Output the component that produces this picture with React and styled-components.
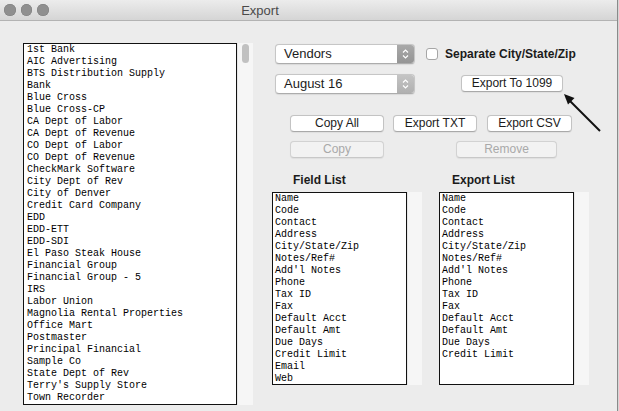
import React from "react";
import styled, { createGlobalStyle } from "styled-components";

const Global = createGlobalStyle`
  html, body { margin: 0; padding: 0; background: #d6d6d6; }
  body { font-family: "Liberation Sans", Arial, sans-serif; }
`;

const Window = styled.div`
  position: relative;
  width: 617px;
  height: 411px;
  background: #ececec;
  border-right: 1px solid #8a8a8a;
  display: flex;
  flex-direction: column;
  overflow: hidden;
`;

const TitleBar = styled.div`
  height: 20px;
  flex: none;
  border-bottom: 1px solid #b3b3b3;
  background: linear-gradient(#ececec, #d5d5d5);
  display: flex;
  align-items: center;
  padding-left: 4px;
`;

const Lights = styled.div`
  display: flex;
  gap: 5px;
  width: 45px;
`;

const Light = styled.span`
  width: 12px;
  height: 12px;
  border-radius: 50%;
  background: #8f8f8f;
  box-shadow: inset 0 0 0 0.5px #7d7d7d;
`;

const Title = styled.div`
  width: 422px;
  text-align: center;
  font-size: 13px;
  color: #4a4a4a;
`;

const Content = styled.div`
  display: flex;
  padding: 22px 0 0 23px;
`;

const ListWrap = styled.div`
  display: flex;
  align-items: flex-start;
`;

const ListBox = styled.div`
  box-sizing: border-box;
  width: ${(p) => p.$w}px;
  height: ${(p) => p.$h}px;
  background: #fff;
  border: 1px solid #111;
  overflow: hidden;
`;

const Track = styled.div`
  box-sizing: border-box;
  width: ${(p) => p.$w}px;
  height: ${(p) => p.$h}px;
  background: #f6f6f6;
  border-left: 1px solid #e6e6e6;
  display: flex;
  justify-content: center;
  padding-top: 1px;
`;

const Thumb = styled.div`
  width: 7px;
  height: 19px;
  border-radius: 4px;
  background: #c1c1c1;
`;

const Row = styled.div`
  height: 12px;
  line-height: 12px;
  font-family: "Liberation Mono", "DejaVu Sans Mono", monospace;
  font-size: 10px;
  color: #000;
  padding-left: ${(p) => p.$pad}px;
  white-space: nowrap;
`;

const Panel = styled.div`
  display: flex;
  flex-direction: column;
  margin-left: 22px;
`;

const Line = styled.div`
  display: flex;
  align-items: ${(p) => p.$align || "center"};
  margin-top: ${(p) => p.$mt}px;
  margin-left: ${(p) => p.$ml || 0}px;
  gap: ${(p) => p.$gap || 0}px;
`;

const Popup = styled.div`
  box-sizing: border-box;
  width: 140px;
  height: 20px;
  display: flex;
  background: #fff;
  border: 1px solid #c6c6c6;
  border-bottom-color: #acacac;
  border-radius: 4px;
  box-shadow: 0 0.5px 1px rgba(0, 0, 0, 0.08);
  overflow: hidden;
`;

const PopupText = styled.div`
  flex: 1;
  font-size: 13px;
  line-height: 18px;
  color: #1b1b1b;
  padding-left: 8px;
`;

const Stepper = styled.div`
  width: 17px;
  background: ${(p) =>
    p.$dim
      ? "linear-gradient(#c4c4c4, #b0b0b0)"
      : "linear-gradient(#a9a9a9, #959595)"};
  display: flex;
  align-items: center;
  justify-content: center;
`;

const Check = styled.span`
  box-sizing: border-box;
  width: 12px;
  height: 12px;
  margin-left: 11px;
  background: #fff;
  border: 1px solid #a6a6a6;
  border-radius: 3px;
`;

const CheckLabel = styled.span`
  margin-left: 7px;
  font-size: 12px;
  font-weight: bold;
  color: #1b1b1b;
`;

const Button = styled.div`
  box-sizing: border-box;
  width: ${(p) => p.$w}px;
  height: 17px;
  margin-left: ${(p) => p.$ml || 0}px;
  margin-top: ${(p) => p.$mt || 0}px;
  background: ${(p) => (p.$disabled ? "#f2f2f2" : "#fff")};
  border: 1px solid ${(p) => (p.$disabled ? "#d2d2d2" : "#c3c3c3")};
  border-bottom-color: ${(p) => (p.$disabled ? "#c8c8c8" : "#a9a9a9")};
  border-radius: 4px;
  box-shadow: 0 0.5px 1px rgba(0, 0, 0, 0.06);
  font-size: 12px;
  line-height: 15px;
  text-align: center;
  color: ${(p) => (p.$disabled ? "#a9a9a9" : "#1b1b1b")};
`;

const Lists = styled.div`
  display: flex;
  margin-left: -3px;
  margin-top: 15px;
  gap: 17px;
`;

const Column = styled.div`
  display: flex;
  flex-direction: column;
`;

const ColLabel = styled.div`
  height: 19px;
  margin-left: ${(p) => p.$ml}px;
  font-size: 12px;
  font-weight: bold;
  color: #1b1b1b;
  line-height: 14px;
`;

const Arrow = styled.svg`
  position: absolute;
  left: 555px;
  top: 88px;
`;

const vendors = [
  "1st Bank", "AIC Advertising", "BTS Distribution Supply", "Bank", "Blue Cross",
  "Blue Cross-CP", "CA Dept of Labor", "CA Dept of Revenue", "CO Dept of Labor",
  "CO Dept of Revenue", "CheckMark Software", "City Dept of Rev", "City of Denver",
  "Credit Card Company", "EDD", "EDD-ETT", "EDD-SDI", "El Paso Steak House",
  "Financial Group", "Financial Group - 5", "IRS", "Labor Union",
  "Magnolia Rental Properties", "Office Mart", "Postmaster", "Principal Financial",
  "Sample Co", "State Dept of Rev", "Terry's Supply Store", "Town Recorder",
];

const fields = [
  "Name", "Code", "Contact", "Address", "City/State/Zip", "Notes/Ref#", "Add'l Notes",
  "Phone", "Tax ID", "Fax", "Default Acct", "Default Amt", "Due Days", "Credit Limit",
  "Email", "Web",
];
const exportFields = fields.slice(0, 14);

const Chevrons = () => (
  <svg width="7" height="12" viewBox="0 0 7 12">
    <path d="M1 4.5 L3.5 2 L6 4.5 M1 7.5 L3.5 10 L6 7.5" fill="none" stroke="#fff" strokeWidth="1.2" />
  </svg>
);

const Select = ({ value, dim }) => (
  <Popup>
    <PopupText>{value}</PopupText>
    <Stepper $dim={dim}>
      <Chevrons />
    </Stepper>
  </Popup>
);

export default function App() {
  return (
    <>
      <Global />
      <Window>
        <TitleBar>
          <Lights>
            <Light />
            <Light />
            <Light />
          </Lights>
          <Title>Export</Title>
        </TitleBar>
        <Content>
          <ListWrap>
            <ListBox $w={214} $h={362}>
              {vendors.map((v) => (
                <Row key={v} $pad={3}>{v}</Row>
              ))}
            </ListBox>
            <Track $w={16} $h={362}>
              <Thumb />
            </Track>
          </ListWrap>
          <Panel>
            <Line $mt={1}>
              <Select value="Vendors" />
              <Check />
              <CheckLabel>Separate City/State/Zip</CheckLabel>
            </Line>
            <Line $mt={10} $align="flex-start">
              <Select value="August 16" dim />
              <Button $w={102} $ml={46} $mt={1}>Export To 1099</Button>
            </Line>
            <Line $mt={21} $ml={15} $gap={9}>
              <Button $w={94}>Copy All</Button>
              <Button $w={84}>Export TXT</Button>
              <Button $w={85} $ml={1}>Export CSV</Button>
            </Line>
            <Line $mt={9} $ml={15}>
              <Button $w={94} $disabled>Copy</Button>
              <Button $w={101} $ml={72} $disabled>Remove</Button>
            </Line>
            <Lists>
              <Column>
                <ColLabel $ml={21}>Field List</ColLabel>
                <ListWrap>
                  <ListBox $w={135} $h={193}>
                    {fields.map((f) => (
                      <Row key={f} $pad={2}>{f}</Row>
                    ))}
                  </ListBox>
                  <Track $w={15} $h={193} />
                </ListWrap>
              </Column>
              <Column>
                <ColLabel $ml={13}>Export List</ColLabel>
                <ListWrap>
                  <ListBox $w={135} $h={193}>
                    {exportFields.map((f) => (
                      <Row key={f} $pad={2}>{f}</Row>
                    ))}
                  </ListBox>
                  <Track $w={15} $h={193} />
                </ListWrap>
              </Column>
            </Lists>
          </Panel>
        </Content>
        <Arrow width="50" height="50" viewBox="555 88 50 50">
          <line x1="600" y1="131" x2="569" y2="100" stroke="#111" strokeWidth="2" />
          <polygon points="564,94 574.5,98 568,104.5" fill="#111" />
        </Arrow>
      </Window>
    </>
  );
}
